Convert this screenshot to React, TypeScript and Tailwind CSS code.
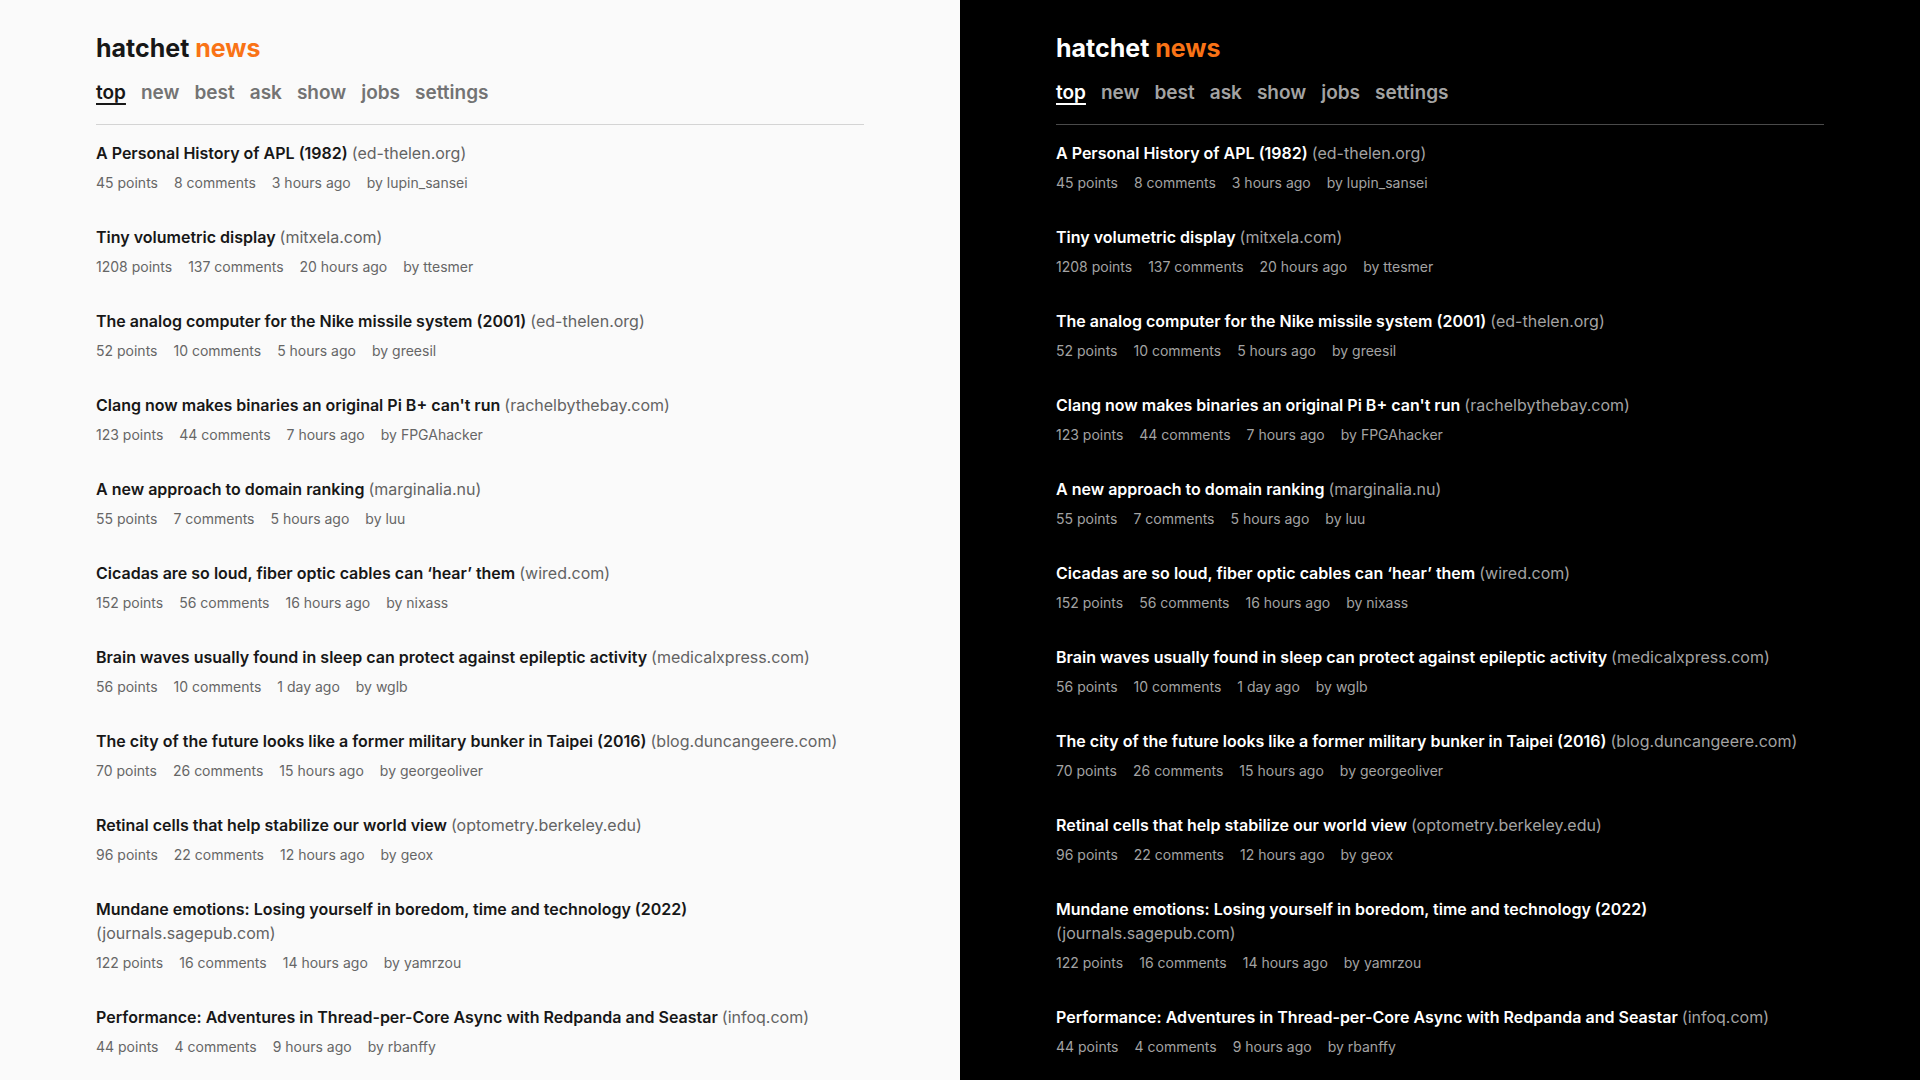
const stories = [
  { title: "A Personal History of APL (1982)", domain: "ed-thelen.org", points: 45, comments: 8, ago: "3 hours ago", by: "lupin_sansei" },
  { title: "Tiny volumetric display", domain: "mitxela.com", points: 1208, comments: 137, ago: "20 hours ago", by: "ttesmer" },
  { title: "The analog computer for the Nike missile system (2001)", domain: "ed-thelen.org", points: 52, comments: 10, ago: "5 hours ago", by: "greesil" },
  { title: "Clang now makes binaries an original Pi B+ can't run", domain: "rachelbythebay.com", points: 123, comments: 44, ago: "7 hours ago", by: "FPGAhacker" },
  { title: "A new approach to domain ranking", domain: "marginalia.nu", points: 55, comments: 7, ago: "5 hours ago", by: "luu" },
  { title: "Cicadas are so loud, fiber optic cables can \u2018hear\u2019 them", domain: "wired.com", points: 152, comments: 56, ago: "16 hours ago", by: "nixass" },
  { title: "Brain waves usually found in sleep can protect against epileptic activity", domain: "medicalxpress.com", points: 56, comments: 10, ago: "1 day ago", by: "wglb" },
  { title: "The city of the future looks like a former military bunker in Taipei (2016)", domain: "blog.duncangeere.com", points: 70, comments: 26, ago: "15 hours ago", by: "georgeoliver" },
  { title: "Retinal cells that help stabilize our world view", domain: "optometry.berkeley.edu", points: 96, comments: 22, ago: "12 hours ago", by: "geox" },
  { title: "Mundane emotions: Losing yourself in boredom, time and technology (2022)", domain: "journals.sagepub.com", points: 122, comments: 16, ago: "14 hours ago", by: "yamrzou" },
  { title: "Performance: Adventures in Thread-per-Core Async with Redpanda and Seastar", domain: "infoq.com", points: 44, comments: 4, ago: "9 hours ago", by: "rbanffy" },
];

const tabs = ["top", "new", "best", "ask", "show", "jobs", "settings"];

function Feed({ dark }: { dark: boolean }) {
  return (
    <div className={dark ? "flex-1 h-[1080px] overflow-hidden bg-black" : "flex-1 h-[1080px] overflow-hidden bg-[#fafafa]"}>
      <div className="mx-auto max-w-3xl pt-8">
        {/* Header */}
        <h1 className={dark ? "text-[25px] font-bold leading-8 text-white" : "text-[25px] font-bold leading-8 text-[#171717]"}>
          hatchet <span className="text-[#f97316]">news</span>
        </h1>
        <nav className={dark ? "mt-[15px] flex gap-[15px] pb-[17px] border-b border-[#4a4a4a]" : "mt-[15px] flex gap-[15px] pb-[17px] border-b border-[#d4d4d4]"}>
          {tabs.map((t, i) => (
            <a
              key={t}
              className={
                i === 0
                  ? dark
                    ? "text-[19px] font-semibold leading-7 text-white underline decoration-2 underline-offset-4"
                    : "text-[19px] font-semibold leading-7 text-[#171717] underline decoration-2 underline-offset-4"
                  : dark
                  ? "text-[19px] font-semibold leading-7 text-[#a3a3a3]"
                  : "text-[19px] font-semibold leading-7 text-[#737373]"
              }
            >
              {t}
            </a>
          ))}
        </nav>

        {/* Stories */}
        <ul>
          {stories.map((s) => (
            <li key={s.title} className="py-4">
              <p className={dark ? "text-base font-semibold leading-6 text-white" : "text-base font-semibold leading-6 text-[#171717]"}>
                {s.title}{" "}
                <span className={dark ? "font-normal text-[#a3a3a3]" : "font-normal text-[#636363]"}>({s.domain})</span>
              </p>
              <div className={dark ? "mt-2 flex gap-4 text-sm leading-5 text-[#a3a3a3]" : "mt-2 flex gap-4 text-sm leading-5 text-[#666666]"}>
                <span>{s.points} points</span>
                <span>{s.comments} comments</span>
                <span>{s.ago}</span>
                <span>by {s.by}</span>
              </div>
            </li>
          ))}
        </ul>
      </div>
    </div>
  );
}

export default function App() {
  return (
    <div className="flex w-[1920px] h-[1080px] overflow-hidden font-['Inter',sans-serif]">
      <Feed dark={false} />
      <Feed dark={true} />
    </div>
  );
}
